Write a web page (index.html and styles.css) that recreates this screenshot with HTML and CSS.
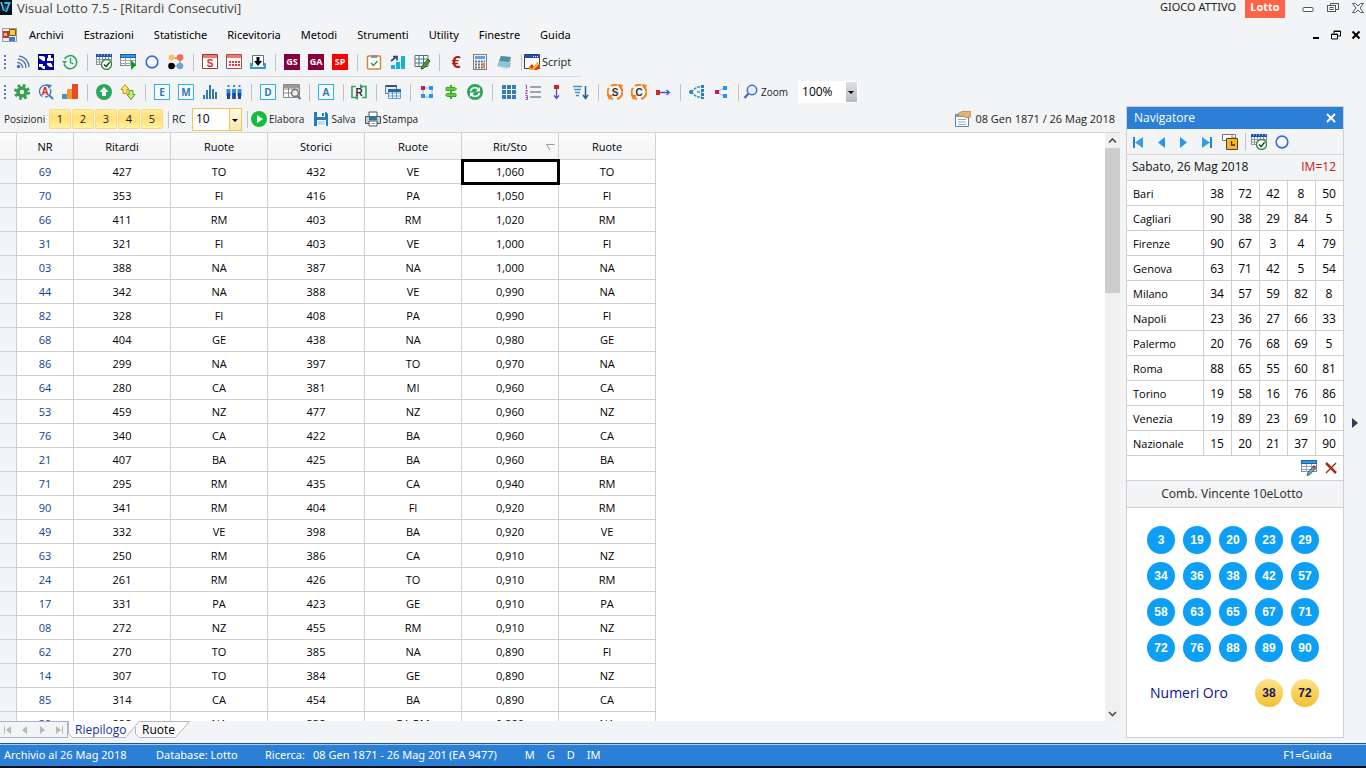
FILE: index.html
```
<!DOCTYPE html>
<html lang="it">
<head>
<meta charset="utf-8">
<title>Visual Lotto 7.5 - [Ritardi Consecutivi]</title>
<link rel="stylesheet" href="styles.css">
</head>
<body>
<svg class="defs" aria-hidden="true">
  <symbol id="calcheck" viewBox="0 0 16 16"><rect x=".5" y=".5" width="15" height="10" fill="#fff" stroke="#8896a5"/><path d="M0 0h16v3H0z" fill="#1e50b4"/><path d="M2 1h1M5 1h1M8 1h1M11 1h1M14 1h1" stroke="#cfe0ff"/><path d="M0 5.500h15M0 8h15M3.500 3v8M6.500 3v8M9.500 3v8M12.500 3v8" stroke="#8896a5"/><circle cx="10.500" cy="10.500" r="5" fill="#fff" stroke="#2f8a3a" stroke-width="1.300"/><path d="M8 10.500l2 2 3.500-4" fill="none" stroke="#333" stroke-width="1.500"/></symbol>
  <symbol id="ring" viewBox="0 0 16 16"><circle cx="8" cy="8" r="5.800" fill="#fff" fill-opacity=".5" stroke="#4169e1" stroke-width="1.700"/></symbol>
  <symbol id="tablegrid" viewBox="0 0 16 16"><rect x=".5" y=".5" width="15" height="11" fill="#fff" stroke="#7c8894"/><path d="M0 0h16v4H0z" fill="#1565b8"/><path d="M1 2h14" stroke="#6cc4ff"/><path d="M0 6.500h15M0 9.500h15M5.500 4v8M10.500 4v8" stroke="#9aa6b0"/></symbol>
  <symbol id="cycle" viewBox="0 0 16 16"><path d="M6 15A7 7 0 0 1 2 4M4 2a7 7 0 0 1 6-1M14 4a7 7 0 0 1-4 11" fill="none" stroke="#f5801c" stroke-width="2"/><path d="M10 0l6 1-2 5zM0 11h6l-4 5z" fill="#f5801c"/></symbol>
</svg>

<header class="titlebar">
  <svg class="logo" viewBox="0 0 12 15"><path d="M0 0h12v15H0z" fill="#061018"/><path d="M0 2l3 9h2L2 2zM4 2h7L7 12H5l3-8H5z" fill="#35b8e8"/><path d="M5 5l1 6" stroke="#1b6a96"/></svg>
  <h1>Visual Lotto 7.5 - [Ritardi Consecutivi]</h1>
  <span class="game">GIOCO ATTIVO</span><strong class="badge">Lotto</strong>
  <div class="winbtns">
    <button aria-label="Riduci"><svg viewBox="0 0 12 12"><rect x="1" y="5.500" width="10" height="4" rx="1" fill="#fff" stroke="#4a5560"/></svg></button>
    <button aria-label="Ripristina"><svg viewBox="0 0 12 12"><path d="M3.500 3V1.500h8v6H9" fill="none" stroke="#4a5560"/><rect x=".5" y="3.500" width="8" height="6" fill="#fff" stroke="#4a5560"/><rect x="3" y="5.500" width="3" height="2" fill="none" stroke="#4a5560"/></svg></button>
    <button aria-label="Chiudi"><svg viewBox="0 0 12 12"><path d="M.5 1.500h3L6 4l2.500-2.500h3L8 6l3.500 4.500h-3L6 8l-2.500 2.500h-3L4 6z" fill="#fff" stroke="#4a5560"/></svg></button>
  </div>
</header>

<nav class="menubar">
  <svg class="i16" viewBox="0 0 16 16"><path d="M.5 1.500h14v13H.5z" fill="#eee" stroke="#999"/><path d="M1 4h6v7H1z" fill="#c03a2b"/><path d="M2 6h3v3H2z" fill="#f7b0a0"/><path d="M7.500 2.500h6v6h-6z" fill="#f9c93c" stroke="#7a5a10"/><path d="M7 10h6v4H7z" fill="#3f77d4"/></svg>
  <a href="#">Archivi</a><a href="#">Estrazioni</a><a href="#">Statistiche</a><a href="#">Ricevitoria</a><a href="#">Metodi</a><a href="#">Strumenti</a><a href="#">Utility</a><a href="#">Finestre</a><a href="#">Guida</a>
  <div class="docbtns">
    <button aria-label="Riduci documento"><svg viewBox="0 0 10 10"><path d="M2 8h6" stroke="#000" stroke-width="2"/></svg></button>
    <button aria-label="Ripristina documento"><svg viewBox="0 0 10 10"><path d="M3 3V1h6.500v5H7M3 1.500h6M.5 4h6v5h-6zM.5 4.500h6" fill="none" stroke="#000"/></svg></button>
    <button aria-label="Chiudi documento"><svg viewBox="0 0 10 10"><path d="M1.500 1.500l7 7m0-7l-7 7" stroke="#000" stroke-width="2"/></svg></button>
  </div>
</nav>

<div class="toolbar first" role="toolbar" aria-label="Standard">
  <i class="grip"></i>
  <button aria-label="Feed"><svg viewBox="0 0 16 16"><circle cx="4.500" cy="12.500" r="1.700" fill="#4a6ca8"/><path d="M3 8.500a5 5 0 0 1 5.500 5.500M4 5a8.500 8.500 0 0 1 8 9M5 2a11 11 0 0 1 10 11" fill="none" stroke="#5b7bb2" stroke-width="1.500"/></svg></button>
  <button aria-label="Quadri"><svg viewBox="0 0 16 16"><path d="M0 0h16v16H0z" fill="#00008f"/><path d="M1 2h4l2 1v4H5L1 4zM10 1h3v3h2v3H9V4h1zM1 10h4v2h2v3H5l-2-2H1zM9 9h4l2 4h-3l-3-2z" fill="#fff"/><path d="M0 8h16M8 0v16" stroke="#0000c8" stroke-width="2"/></svg></button>
  <button aria-label="Cronologia"><svg viewBox="0 0 16 16"><path d="M2.500 5A6.500 6.500 0 1 1 2 10" fill="none" stroke="#26a65b" stroke-width="1.500"/><path d="M0 7h5L2.500 10z" fill="#26a65b"/><path d="M8.500 4v4.500l3 1.500" fill="none" stroke="#26a65b" stroke-width="1.300"/></svg></button>
  <i class="sep"></i>
  <button aria-label="Verifica calendario"><svg><use href="#calcheck"/></svg></button>
  <button aria-label="Esegui tabella"><svg viewBox="0 0 16 16"><use href="#tablegrid" width="16" height="16"/><path d="M11 6l5 5-5 5z" fill="#0d9a18"/></svg></button>
  <button aria-label="Cerchio"><svg><use href="#ring"/></svg></button>
  <button aria-label="Gruppi"><svg viewBox="0 0 16 16"><path d="M4 4h8M4 12h8M12 4v8" stroke="#777"/><circle cx="3.500" cy="3.500" r="3" fill="#f7c35f"/><circle cx="12" cy="3.500" r="3.300" fill="#f76c4d"/><circle cx="3.500" cy="12" r="3.300" fill="#000"/><circle cx="12" cy="12" r="3.300" fill="#6ea4d8"/></svg></button>
  <i class="sep"></i>
  <button aria-label="Scheda S"><svg viewBox="0 0 16 16"><path d="M.5.500h15v14H.5z" fill="#fff" stroke="#8b4040"/><path d="M1 1h14v3H1z" fill="#f4776e"/><text x="8" y="13" class="ired">S</text></svg></button>
  <button aria-label="Calendario"><svg viewBox="0 0 16 16"><path d="M.5.500h15v14H.5z" fill="#fff" stroke="#a05050"/><path d="M1 1h14v3H1z" fill="#f4776e"/><path d="M3 8h11M3 11h11" stroke="#e33" stroke-width="2" stroke-dasharray="2 1"/></svg></button>
  <button aria-label="Scarica"><svg viewBox="0 0 16 16"><path d="M2.500 12V1.500h11V12" fill="#fff" stroke="#65717d"/><path d="M0 9h2v4h12V9h2v6H0z" fill="#2a9fd6"/><path d="M6.500 3h3v4H12l-4 5-4-5h2.500z" fill="#000"/></svg></button>
  <i class="sep"></i>
  <button class="tag plum">GS</button><button class="tag plum">GA</button><button class="tag red">SP</button>
  <i class="sep"></i>
  <button aria-label="Appunti"><svg viewBox="0 0 16 16"><rect x="1.500" y="2" width="13" height="13" rx="1" fill="#fff" stroke="#c98b3c" stroke-width="1.500"/><path d="M5 1h6v3H5z" fill="#8b95a0"/><path d="M5 9l2.500 2.500L11.500 7" fill="none" stroke="#3c9460" stroke-width="1.500"/></svg></button>
  <button aria-label="Andamento"><svg viewBox="0 0 16 16"><path d="M1 11h4v4H1zM6 8h4v7H6zM11 2h4v13h-4z" fill="#10b4d8"/><path d="M1 7l5-4M3 2.500h4v4" fill="none" stroke="#26459b" stroke-width="1.700"/></svg></button>
  <button aria-label="Modifica griglia"><svg viewBox="0 0 16 16"><path d="M1 1.500h13v11H1zM1 5h13M1 9h13M5 1v12M9.500 1v12" fill="#fff" stroke="#477487"/><path d="M14 5l2 2-6 7-3 1 1-3z" fill="#49a72b" stroke="#22541a"/></svg></button>
  <i class="sep"></i>
  <button class="euro">€</button>
  <button aria-label="Calcolatrice"><svg viewBox="0 0 16 16"><rect x="1.500" y=".5" width="13" height="15" fill="#eef" stroke="#887e78"/><path d="M3 2h10v3H3z" fill="#5aa8e8"/><path d="M3 7.500h10M3 10.500h10M3 13.500h10" stroke="#777" stroke-width="2" stroke-dasharray="2 1"/><path d="M11 9h2v5h-2z" fill="#e48a40"/></svg></button>
  <button aria-label="Taccuino"><svg viewBox="0 0 16 16"><path d="M5 2l10 1-3 11-11-2z" fill="#8cc6d6"/><path d="M5 2l10 1-2 5-10-1z" fill="#4f8fa6"/><path d="M15 3l-1 10-2 1z" fill="#91a5ad"/><path d="M1 12l11 2-1 1-9-2z" fill="#c6d8df"/></svg></button>
  <i class="sep narrow"></i>
  <button class="labeled"><svg viewBox="0 0 16 16"><path d="M.5.500h15v14H.5z" fill="#fff" stroke="#345"/><path d="M1 1h14v3H1z" fill="#2748b8"/><path d="M9 2.500h5" stroke="#fff" stroke-dasharray="1"/><path d="M5 13l3-3 3 4 5-5v4l-3 3H6z" fill="#e23b1d"/><path d="M5 12l3 3 5-7 2 1-5 7H6z" fill="#f5b91d"/></svg>Script</button>
</div>

<div class="toolbar second" role="toolbar" aria-label="Analisi">
  <i class="grip"></i>
  <button aria-label="Impostazioni"><svg viewBox="0 0 16 16"><circle cx="8" cy="8" r="6.500" fill="none" stroke="#35a052" stroke-width="3" stroke-dasharray="2.600 2.500"/><circle cx="8" cy="8" r="4" fill="none" stroke="#35a052" stroke-width="3.500"/></svg></button>
  <button aria-label="Analizza"><svg viewBox="0 0 16 16"><path d="M4.500 12.500A6 6 0 0 1 9 1.500M12.500 5A6 6 0 0 1 7 13" fill="none" stroke="#3a82c4" stroke-width="1.400"/><path d="M11 11l4 4" stroke="#3a82c4" stroke-width="2"/><path d="M8 0l6 1-3 4z" fill="#3a82c4"/><text x="7" y="10.500" class="ired">A</text></svg></button>
  <button aria-label="Grafico"><svg viewBox="0 0 16 16"><path d="M0 10h5v5H0z" fill="#4990cc"/><path d="M5 5h5v10H5z" fill="#f99521"/><path d="M10 0h6v15h-6z" fill="#e54b24"/></svg></button>
  <i class="sep"></i>
  <button aria-label="Su"><svg viewBox="0 0 16 16"><circle cx="8" cy="8" r="8" fill="#2aa75a"/><path d="M8 3l4.500 5H10v4H6V8H3.500z" fill="#fff"/></svg></button>
  <button aria-label="Scambia"><svg viewBox="0 0 16 16"><path d="M5 .5l4 5H7v4H3v-4H1z" fill="#ffe56a" stroke="#b89618"/><path d="M9 6.500h4v4h2l-4 5-4-5h2z" fill="#c9ed75" stroke="#5a9d20"/></svg></button>
  <i class="sep"></i>
  <button class="letter">E</button><button class="letter">M</button>
  <button aria-label="Istogramma"><svg viewBox="0 0 16 16"><path d="M2 15v-4M5 15V6M8 15V1M11 15V5M14 15V8" stroke="#3478b0" stroke-width="2"/></svg></button>
  <button aria-label="Persone"><svg viewBox="0 0 16 16"><path d="M2.500 5v7M8 5v10M13.500 5v7" stroke="#2a92d0" stroke-width="4"/><path d="M2.500 9v6M8 9v6M13.500 9v6" stroke="#273f98" stroke-width="3"/><path d="M2.500 1v2M8 1v2M13.500 1v2" stroke="#5578b8" stroke-width="2"/></svg></button>
  <i class="sep"></i>
  <button class="letter">D</button>
  <button aria-label="Cerca nella tabella"><svg class="wide" viewBox="0 0 18 16"><path d="M.5.500h16v13H.5zM0 5h16M0 9h16M5.500 1v12M11 1v12" fill="#fff" stroke="#888"/><path d="M1 1h15v3H1z" fill="#999"/><circle cx="12" cy="9" r="3.500" fill="#e9edf0" stroke="#777" stroke-width="1.500"/><path d="M14.500 12l3 3" stroke="#777" stroke-width="2"/></svg></button>
  <i class="sep"></i>
  <button class="letter">A</button>
  <i class="sep tight"></i>
  <button aria-label="Ricalcola"><svg viewBox="0 0 16 16"><path d="M5 2.500H1v11h4M11 13.500h4v-11h-4" fill="none" stroke="#39a36c" stroke-width="1.700"/><path d="M9 0l4 2.500-4 2.500zM7 11l-4 2.500L7 16z" fill="#39a36c"/><text x="8" y="11.500" class="idark">R</text></svg></button>
  <i class="sep"></i>
  <button aria-label="Tabelle"><svg viewBox="0 0 16 16"><path d="M.5 1.500h11v8H.5z" fill="#e6edf4" stroke="#678"/><path d="M1 1h11v2H1z" fill="#456"/><path d="M3.500 5.500h12v9h-12zM4 9h12M4 12h12M7.500 6v9M11.500 6v9" fill="#fff" stroke="#5c9fd0"/><path d="M3 5h13v3H3z" fill="#28689e"/></svg></button>
  <i class="sep"></i>
  <button aria-label="Nodi"><svg viewBox="0 0 16 16"><path d="M4 4h9v9H4z" fill="none" stroke="#8ab9df"/><path d="M2 2h4v4H2z" fill="#d31652"/><path d="M10 2h4v4h-4zM2 10h4v4H2zM10 10h4v4h-4z" fill="#2994ee"/></svg></button>
  <button aria-label="Direzioni"><svg viewBox="0 0 16 16"><path d="M8 1v14" stroke="#38a832" stroke-width="2"/><path d="M3 3.500h9l1.500 1.500L12 6.500H3zM13 9.500H4L2.500 11 4 12.500h9z" fill="#62cc36" stroke="#38a832"/></svg></button>
  <button aria-label="Aggiorna"><svg viewBox="0 0 16 16"><circle cx="8" cy="8" r="8" fill="#2aa75a"/><path d="M3.500 7a4.500 4.500 0 0 1 8-1.500M12.500 9a4.500 4.500 0 0 1-8 1.500" fill="none" stroke="#fff" stroke-width="1.700"/><path d="M13 3v4.500H8.500zM3 13V8.500h4.500z" fill="#fff"/></svg></button>
  <i class="sep"></i>
  <button aria-label="Riquadri"><svg viewBox="0 0 16 16"><path d="M3 1v14M8 1v14M13 1v14" stroke="#367db8" stroke-width="4" stroke-dasharray="4 1"/></svg></button>
  <button aria-label="Elenco"><svg viewBox="0 0 16 16"><path d="M5 3h11M5 8h11M5 13h11" stroke="#78909c" stroke-width="1.500"/><path d="M.5 1h1v4M.5 6.500h2L.5 9.500h2M.5 11.500h2v4h-2M.5 13.500h2" fill="none" stroke="#a14ab5"/></svg></button>
  <button aria-label="Verso il basso"><svg viewBox="0 0 16 16"><path d="M5 1h5v4H5z" fill="#d52222"/><path d="M7.500 5v9M5 11.500l2.500 3 2.500-3" fill="none" stroke="#4650e8" stroke-width="1.300"/></svg></button>
  <button aria-label="Ordina"><svg viewBox="0 0 16 16"><path d="M0 2.500h9M1 5.500h7M2 8.500h5M3 11.500h3" stroke="#4c90bd" stroke-width="1.500"/><path d="M12.500 2v12M10 11l2.500 3.500L15 11" fill="none" stroke="#1f6298" stroke-width="1.500"/></svg></button>
  <i class="sep"></i>
  <button aria-label="Ciclo S"><svg viewBox="0 0 16 16"><use href="#cycle" width="16" height="16"/><text x="8" y="11.500" class="idark">S</text></svg></button>
  <button aria-label="Ciclo C"><svg viewBox="0 0 16 16"><use href="#cycle" width="16" height="16"/><text x="8" y="11.500" class="idark">C</text></svg></button>
  <button aria-label="Verso destra"><svg viewBox="0 0 16 16"><path d="M1 6h4v5H1z" fill="#d52222"/><path d="M5 8.500h9M11.500 6l3 2.500-3 2.500" fill="none" stroke="#4650e8" stroke-width="1.300"/></svg></button>
  <i class="sep"></i>
  <button aria-label="Rami"><svg viewBox="0 0 16 16"><path d="M2 8l6-5h5M8 8h5M2 8l6 5h5" fill="none" stroke="#3f8dc0" stroke-width="1.500" stroke-dasharray="3 1"/><circle cx="2" cy="8" r="2" fill="#2c80b9"/><path d="M13.500 1v14" stroke="#2c80b9" stroke-width="3" stroke-dasharray="3 1"/></svg></button>
  <button aria-label="Condividi"><svg viewBox="0 0 16 16"><path d="M12 3.500L4 8l8 5" fill="none" stroke="#7fbbe4"/><path d="M2 6h4v4H2z" fill="#d31652"/><path d="M10 2h4v4h-4zM10 10h4v4h-4z" fill="#2994ee"/></svg></button>
  <i class="sep"></i>
  <label class="labeled" for="zoom"><svg viewBox="0 0 16 16"><circle cx="9" cy="6" r="4.700" fill="#e6f0ff" stroke="#4567cf" stroke-width="1.500"/><path d="M5.500 9.500L1.500 14" stroke="#4567cf" stroke-width="2.300"/></svg>Zoom</label>
  <span class="combo gray"><select id="zoom"><option>100%</option></select></span>
</div>

<div class="workspace">
  <main class="document">
    <div class="filter">
      <span class="poslabel">Posizioni</span>
      <div class="positions"><button>1</button><button>2</button><button>3</button><button>4</button><button>5</button></div>
      <i class="sep narrow"></i>
      <label class="rc" for="rc">RC</label>
      <span class="combo gold"><select id="rc"><option>10</option></select></span>
      <i class="sep tight"></i>
      <button class="labeled"><svg viewBox="0 0 16 16"><circle cx="8" cy="8" r="8" fill="#0fbe3c"/><path d="M6 4l6 4-6 4z" fill="#fff"/></svg>Elabora</button>
      <button class="labeled"><svg viewBox="0 0 16 16"><path d="M1 1h12l2 2v12H1z" fill="#277db9"/><path d="M4 1h8v5H4zM4 9h9v6H4z" fill="#fff"/><path d="M9 2h2v3H9z" fill="#277db9"/><path d="M5 11h7M5 13h7" stroke="#8bbbd8"/></svg>Salva</button>
      <button class="labeled"><svg viewBox="0 0 16 16"><path d="M1 5.500h14.500v7H.5v-7z" fill="#c8cdd1" stroke="#4e555b"/><path d="M4 1h8v5H4z" fill="#fff" stroke="#4e555b"/><path d="M4 5h8v4H4z" fill="#28779b"/><path d="M4 10h8v5H4z" fill="#fff" stroke="#4e555b"/><path d="M6 12.500h4" stroke="#999"/></svg>Stampa</button>
      <span class="range"><svg class="i16" viewBox="0 0 16 16"><path d="M.5 3.500h13v12H.5z" fill="#fff" stroke="#5685ac"/><path d="M1 4h12v2H1z" fill="#6fa8d5"/><path d="M3 8.500h8M3 11h8M3 13.500h8" stroke="#9aabb9"/><path d="M3 2.500L7 .5h9v5l-4 1.500-4-2-4 1z" fill="#e3b27c" stroke="#a97845" stroke-width=".7"/></svg>08 Gen 1871 / 26 Mag 2018</span>
    </div>
    <div class="gridarea">
      <div class="gridclip">
      <table class="grid">
        <colgroup><col class="cmark"><col class="cnr"><col class="cval"><col class="cval"><col class="cval"><col class="cval"><col class="cval"><col class="cval"></colgroup>
        <thead><tr><th></th><th>NR</th><th>Ritardi</th><th>Ruote</th><th>Storici</th><th>Ruote</th><th class="sorted">Rit/Sto<svg viewBox="0 0 9 7"><path d="M8.500.500H.5L4 6" fill="none" stroke="#999"/></svg></th><th>Ruote</th></tr></thead>
        <tbody>
        <tr><td></td><td>69</td><td>427</td><td>TO</td><td>432</td><td>VE</td><td class="current">1,060</td><td>TO</td></tr>
        <tr><td></td><td>70</td><td>353</td><td>FI</td><td>416</td><td>PA</td><td>1,050</td><td>FI</td></tr>
        <tr><td></td><td>66</td><td>411</td><td>RM</td><td>403</td><td>RM</td><td>1,020</td><td>RM</td></tr>
        <tr><td></td><td>31</td><td>321</td><td>FI</td><td>403</td><td>VE</td><td>1,000</td><td>FI</td></tr>
        <tr><td></td><td>03</td><td>388</td><td>NA</td><td>387</td><td>NA</td><td>1,000</td><td>NA</td></tr>
        <tr><td></td><td>44</td><td>342</td><td>NA</td><td>388</td><td>VE</td><td>0,990</td><td>NA</td></tr>
        <tr><td></td><td>82</td><td>328</td><td>FI</td><td>408</td><td>PA</td><td>0,990</td><td>FI</td></tr>
        <tr><td></td><td>68</td><td>404</td><td>GE</td><td>438</td><td>NA</td><td>0,980</td><td>GE</td></tr>
        <tr><td></td><td>86</td><td>299</td><td>NA</td><td>397</td><td>TO</td><td>0,970</td><td>NA</td></tr>
        <tr><td></td><td>64</td><td>280</td><td>CA</td><td>381</td><td>MI</td><td>0,960</td><td>CA</td></tr>
        <tr><td></td><td>53</td><td>459</td><td>NZ</td><td>477</td><td>NZ</td><td>0,960</td><td>NZ</td></tr>
        <tr><td></td><td>76</td><td>340</td><td>CA</td><td>422</td><td>BA</td><td>0,960</td><td>CA</td></tr>
        <tr><td></td><td>21</td><td>407</td><td>BA</td><td>425</td><td>BA</td><td>0,960</td><td>BA</td></tr>
        <tr><td></td><td>71</td><td>295</td><td>RM</td><td>435</td><td>CA</td><td>0,940</td><td>RM</td></tr>
        <tr><td></td><td>90</td><td>341</td><td>RM</td><td>404</td><td>FI</td><td>0,920</td><td>RM</td></tr>
        <tr><td></td><td>49</td><td>332</td><td>VE</td><td>398</td><td>BA</td><td>0,920</td><td>VE</td></tr>
        <tr><td></td><td>63</td><td>250</td><td>RM</td><td>386</td><td>CA</td><td>0,910</td><td>NZ</td></tr>
        <tr><td></td><td>24</td><td>261</td><td>RM</td><td>426</td><td>TO</td><td>0,910</td><td>RM</td></tr>
        <tr><td></td><td>17</td><td>331</td><td>PA</td><td>423</td><td>GE</td><td>0,910</td><td>PA</td></tr>
        <tr><td></td><td>08</td><td>272</td><td>NZ</td><td>455</td><td>RM</td><td>0,910</td><td>NZ</td></tr>
        <tr><td></td><td>62</td><td>270</td><td>TO</td><td>385</td><td>NA</td><td>0,890</td><td>FI</td></tr>
        <tr><td></td><td>14</td><td>307</td><td>TO</td><td>384</td><td>GE</td><td>0,890</td><td>NZ</td></tr>
        <tr><td></td><td>85</td><td>314</td><td>CA</td><td>454</td><td>BA</td><td>0,890</td><td>CA</td></tr>
        <tr><td></td><td>39</td><td>298</td><td>NA</td><td>338</td><td>PA RM</td><td>0,880</td><td>NA</td></tr>
        </tbody>
      </table>
      </div>
      <div class="scroll">
        <button aria-label="Scorri su"><svg viewBox="0 0 15 15"><path d="M4 9.500L7.500 6 11 9.500" fill="none" stroke="#505050" stroke-width="1.700"/></svg></button>
        <div class="track"><div class="thumb"></div></div>
        <button aria-label="Scorri giù"><svg viewBox="0 0 15 15"><path d="M4 6l3.500 3.500L11 6" fill="none" stroke="#505050" stroke-width="1.700"/></svg></button>
      </div>
    </div>
    <div class="sheets">
      <div class="sheetnav">
        <button aria-label="Primo foglio"><svg viewBox="0 0 10 10"><path d="M1.500 1v8" stroke="#b5b8bc"/><path d="M8 1v8L3 5z" fill="#b5b8bc"/></svg></button>
        <button aria-label="Foglio precedente"><svg viewBox="0 0 10 10"><path d="M7 1v8L2 5z" fill="#b5b8bc"/></svg></button>
        <button aria-label="Foglio successivo"><svg viewBox="0 0 10 10"><path d="M3 1v8l5-4z" fill="#b5b8bc"/></svg></button>
        <button aria-label="Ultimo foglio"><svg viewBox="0 0 10 10"><path d="M8.500 1v8" stroke="#b5b8bc"/><path d="M2 1v8l5-4z" fill="#b5b8bc"/></svg></button>
      </div>
      <button class="sheet on"><svg viewBox="0 0 72 17" preserveAspectRatio="none"><path d="M.5 0v12l4 4.500h53L71.500 0" fill="#fff" stroke="#b4b6ba"/></svg><span>Riepilogo</span></button>
      <button class="sheet"><svg viewBox="0 0 56 17" preserveAspectRatio="none"><path d="M.5 6v7l4 3.500h36L54.500.500H5" fill="#fbfbfb" stroke="#b4b6ba"/></svg><span>Ruote</span></button>
    </div>
  </main>

  <aside class="navigator">
    <div class="navtitle"><h2>Navigatore</h2><button aria-label="Chiudi navigatore"><svg viewBox="0 0 12 12"><path d="M2 2l8 8m0-8l-8 8" stroke="#fff" stroke-width="2"/></svg></button></div>
    <div class="navtools">
      <button aria-label="Prima estrazione"><svg viewBox="0 0 16 16"><path d="M4 3v11" stroke="#2386cc" stroke-width="2"/><path d="M13 3v11L5 8.500z" fill="#3a9de0"/></svg></button>
      <button aria-label="Precedente"><svg viewBox="0 0 16 16"><path d="M12 3v11L5 8.500z" fill="#2196f3"/></svg></button>
      <button aria-label="Successiva"><svg viewBox="0 0 16 16"><path d="M4 3v11l7-5.500z" fill="#2196f3"/></svg></button>
      <button aria-label="Ultima estrazione"><svg viewBox="0 0 16 16"><path d="M12 3v11" stroke="#2386cc" stroke-width="2"/><path d="M3 3v11l8-5.500z" fill="#3a9de0"/></svg></button>
      <button aria-label="Orario"><svg viewBox="0 0 16 16"><path d="M.5.500h13v6H.5z" fill="#fff" stroke="#777"/><path d="M10 1v3h3" fill="none" stroke="#777"/><path d="M4.500 4.500h11v11h-11z" fill="#f9b52b" stroke="#5d4414"/><path d="M9.500 7v4h3.500" fill="none" stroke="#402c05" stroke-width="1.300"/></svg></button>
      <i class="sep narrow"></i>
      <button aria-label="Verifica calendario"><svg><use href="#calcheck"/></svg></button>
      <button aria-label="Cerchio"><svg><use href="#ring"/></svg></button>
    </div>
    <div class="navdate"><span>Sabato, 26 Mag 2018</span><span class="im">IM=12</span></div>
    <table class="wheels">
      <tr><th scope="row">Bari</th><td>38</td><td>72</td><td>42</td><td>8</td><td>50</td></tr>
      <tr><th scope="row">Cagliari</th><td>90</td><td>38</td><td>29</td><td>84</td><td>5</td></tr>
      <tr><th scope="row">Firenze</th><td>90</td><td>67</td><td>3</td><td>4</td><td>79</td></tr>
      <tr><th scope="row">Genova</th><td>63</td><td>71</td><td>42</td><td>5</td><td>54</td></tr>
      <tr><th scope="row">Milano</th><td>34</td><td>57</td><td>59</td><td>82</td><td>8</td></tr>
      <tr><th scope="row">Napoli</th><td>23</td><td>36</td><td>27</td><td>66</td><td>33</td></tr>
      <tr><th scope="row">Palermo</th><td>20</td><td>76</td><td>68</td><td>69</td><td>5</td></tr>
      <tr><th scope="row">Roma</th><td>88</td><td>65</td><td>55</td><td>60</td><td>81</td></tr>
      <tr><th scope="row">Torino</th><td>19</td><td>58</td><td>16</td><td>76</td><td>86</td></tr>
      <tr><th scope="row">Venezia</th><td>19</td><td>89</td><td>23</td><td>69</td><td>10</td></tr>
      <tr><th scope="row">Nazionale</th><td>15</td><td>20</td><td>21</td><td>37</td><td>90</td></tr>
    </table>
    <div class="navactions">
      <button aria-label="Modifica"><svg viewBox="0 0 16 16"><use href="#tablegrid" width="16" height="16"/><path d="M13 5.500l2 2-6 7-3 1 1-3z" fill="#58a9e0" stroke="#564028" stroke-width=".8"/><path d="M13 5.500l2 2-1.500 1.500-2-2z" fill="#d33"/></svg></button>
      <button aria-label="Elimina"><svg viewBox="0 0 16 16"><path d="M3 3l10 10" stroke="#a83018" stroke-width="2.500"/><path d="M13 3L3 13" stroke="#a83018" stroke-width="1.500"/></svg></button>
    </div>
    <h3>Comb. Vincente 10eLotto</h3>
    <div class="winning">
      <div class="balls"><b>3</b><b>19</b><b>20</b><b>23</b><b>29</b><b>34</b><b>36</b><b>38</b><b>42</b><b>57</b><b>58</b><b>63</b><b>65</b><b>67</b><b>71</b><b>72</b><b>76</b><b>88</b><b>89</b><b>90</b></div>
      <div class="balls oro"><span>Numeri Oro</span><b>38</b><b>72</b></div>
    </div>
  </aside>
  <div class="dock"><button aria-label="Espandi"><svg viewBox="0 0 6 10"><path d="M0 0v10l6-5z" fill="#2e3f57"/></svg></button></div>
</div>

<footer class="status">
  <span class="s1">Archivio al 26 Mag 2018</span><span class="s2">Database: Lotto</span><span class="s3">Ricerca:</span><span class="s4">08 Gen 1871 - 26 Mag 201</span><span>(EA 9477)</span>
  <span class="flags"><span>M</span><span>G</span><span>D</span><span>IM</span></span>
  <span class="help">F1=Guida</span>
</footer>
</body>
</html>
```
FILE: styles.css
```
* { box-sizing: border-box; }
body { margin: 0; height: 100vh; display: flex; flex-direction: column; overflow: hidden; background: #f3f4f6; color: #222; font: 11px/16px "Open Sans", "Noto Sans", sans-serif; }
button { border: 0; padding: 0; margin: 0; background: none; color: inherit; font: inherit; }
h1, h2, h3 { margin: 0; font-weight: 400; }
svg { display: block; flex: none; }
a { color: inherit; text-decoration: none; }
.defs { position: absolute; width: 0; height: 0; }
.i16 { width: 16px; height: 16px; }

.titlebar { display: flex; align-items: flex-start; height: 21px; }
.logo { width: 12px; height: 15px; margin-right: 5px; }
.titlebar h1 { flex: 1; font-size: 13px; line-height: 16px; color: #444; }
.game { font-family: "Noto Sans", sans-serif; line-height: 14px; margin-right: 9px; }
.badge { background: #ff6347; color: #fff; width: 40px; height: 18px; text-align: center; font-size: 11px; line-height: 14px; }
.winbtns { display: flex; gap: 13px; margin: 2px 2px 0 17px; }
.winbtns svg { width: 12px; height: 12px; }

.menubar { display: flex; align-items: center; gap: 20px; height: 28px; padding-left: 2px; color: #000; font-family: "Noto Sans", sans-serif; }
.menubar .i16 { margin-right: -9px; }
.docbtns { display: flex; gap: 10px; margin: 0 5px 0 auto; }
.docbtns svg { width: 10px; height: 10px; }

.toolbar { display: flex; align-items: center; }
.first { width: 581px; height: 28px; padding-bottom: 1px; border-bottom: 1px solid #d9dadc; }
.second { height: 30px; }
.toolbar > button { width: 24px; height: 24px; display: flex; align-items: center; justify-content: center; }
.toolbar svg, .navtools svg, .navactions svg, .filter svg { width: 16px; height: 16px; }
.toolbar svg.wide { width: 18px; }
.grip { width: 10px; height: 16px; background: radial-gradient(circle, #4f7fd0 0 1px, transparent 1px) 3px 0 / 4px 4px repeat-y; }
.sep { width: 10px; height: 17px; flex: none; background: linear-gradient(#bfc2c6, #bfc2c6) 5px 0 / 1px 100% no-repeat; }
.sep.tight { width: 9px; }
.sep.narrow { width: 8px; }
.labeled, .toolbar > button.labeled { display: flex; width: auto; align-items: center; gap: 2px; font-size: 10px; }
.toolbar > button.labeled { font-size: 11px; }
.toolbar > .tag { width: 16px; height: 16px; margin: 0 4px; color: #fff; font-size: 9px; font-weight: 700; }
.plum { background: #85003f; }
.red { background: #fb0000; }
.toolbar > .letter { width: 16px; height: 16px; margin: 0 4px; border: 1px solid #2bb0ee; background: #fafdff; color: #3278b4; font-size: 10px; font-weight: 700; }
.toolbar > .euro { color: #a51c1c; font-size: 16px; font-weight: 700; }
.ired, .idark { font: 700 10px "Liberation Sans", sans-serif; text-anchor: middle; fill: #e02020; }
.idark { fill: #333; }

.combo { position: relative; display: flex; background: #fff; }
.combo select { appearance: none; border: 0; margin: 0; background: transparent; font: inherit; font-size: 12px; color: #000; }
.combo::before, .combo::after { content: ""; position: absolute; pointer-events: none; }
.combo::before { top: 1px; bottom: 1px; right: 1px; width: 11px; background: linear-gradient(#dcdee0, #b8bbbe); }
.combo::after { right: 4px; top: 10px; border: 3px solid transparent; border-top-color: #000; border-bottom: 0; }
.combo.gray { width: 60px; height: 22px; margin-left: 10px; }
.combo.gray select { width: 60px; padding: 0 4px; }
.combo.gold { width: 50px; height: 23px; border: 1px solid #efc55e; }
.combo.gold select { width: 48px; padding: 0 3px; }
.combo.gold::before { top: 0; bottom: 0; right: 0; background: linear-gradient(#fffbe8, #fbe6a8); border-left: 1px solid #efc55e; }
.combo.gold::after { right: 3px; }

.workspace { flex: 1; min-height: 0; display: flex; padding-bottom: 5px; }
.document { flex: 1; min-width: 0; display: flex; flex-direction: column; margin-right: 6px; }
.filter { display: flex; align-items: center; height: 25px; padding: 0 5px 1px 4px; }
.poslabel { width: 45px; font-size: 10px; }
.positions { display: flex; gap: 1px; }
.positions button { width: 22px; height: 20px; border: 1px solid #fad978; border-radius: 2px; background: linear-gradient(#ffec9c, #ffdf77 45%, #fff3a0); }
.rc { width: 21px; padding-left: 1px; }
.filter .labeled { margin-right: 9px; }
.range { display: flex; gap: 4px; align-items: center; margin-left: auto; }

.gridarea { flex: 1; min-height: 0; display: flex; border-top: 1px solid #d3d5d8; background: #fff; }
.gridclip { flex: 1; overflow: hidden; }
.grid { border-collapse: separate; border-spacing: 0; table-layout: fixed; width: 656px; color: #000; text-align: center; }
.cmark { width: 17px; }
.cnr { width: 57px; }
.cval { width: 97px; }
.grid th, .grid td { height: 24px; padding: 0; border: solid #d0d0d0; border-width: 0 1px 1px 0; }
.grid th { height: 27px; padding-top: 1px; font-weight: 400; background: linear-gradient(#fbfbfc, #f3f4f5); }
.grid td:first-child { background: #f3f4f6; }
.grid td:nth-child(2) { color: #0b4394; }
.grid .sorted { position: relative; }
.sorted svg { position: absolute; right: 3px; top: 11px; width: 9px; height: 7px; }
.grid .current { position: relative; outline: 3px solid #000; outline-offset: -2px; }
.scroll { width: 15px; display: flex; flex-direction: column; background: #f0f0f0; }
.scroll svg { width: 15px; height: 15px; }
.track { flex: 1; }
.thumb { height: 26%; background: #cdcdcd; }

.sheets { display: flex; align-items: flex-start; height: 17px; }
.sheetnav { width: 68px; height: 17px; display: flex; align-items: center; justify-content: space-around; border: 1px solid #a9b2d0; border-left: 0; }
.sheetnav svg { width: 10px; height: 10px; }
.sheet { position: relative; width: 56px; height: 17px; margin-left: -5px; text-align: left; color: #000; font-size: 12px; }
.sheet.on { z-index: 1; width: 72px; margin-left: 0; color: #1330a0; }
.sheet svg { position: absolute; inset: 0; width: 100%; height: 100%; }
.sheet span { position: relative; padding-left: 7px; }

.navigator { width: 218px; margin-top: -1px; border: 1px solid #d0d0d0; background: #f3f4f6; display: flex; flex-direction: column; color: #111; }
.navtitle { display: flex; align-items: center; height: 22px; padding: 0 6px 0 7px; background: #2b80d5; color: #fff; }
.navtitle h2 { flex: 1; font-size: 12px; line-height: 16px; }
.navtitle svg { width: 12px; height: 12px; }
.navtools { display: flex; align-items: center; height: 26px; padding-left: 3px; gap: 7px; border-bottom: 1px solid #d4d6d9; }
.navtools .sep { margin: 0 -4px 0 -5px; }
.navdate { display: flex; justify-content: space-between; align-items: center; height: 25px; padding: 0 7px 1px 5px; font-size: 12px; }
.im { color: #c81414; }
.wheels { width: 100%; table-layout: fixed; border-collapse: separate; border-spacing: 0; background: #fff; color: #000; }
.wheels th, .wheels td { height: 25px; padding: 1px 0 0; border-top: 1px solid #d0d0d0; border-left: 1px solid #d0d0d0; font-weight: 400; text-align: center; }
.wheels td { width: 28px; padding-right: 1px; font-size: 12px; }
.wheels th { border-left: 0; padding-left: 6px; text-align: left; }
.navactions { display: flex; align-items: center; justify-content: flex-end; gap: 6px; height: 26px; padding-right: 4px; background: #fff; border: solid #d0d0d0; border-width: 1px 0; }
.navigator h3 { height: 27px; border-bottom: 1px solid #d0d0d0; font-family: "Noto Sans", sans-serif; font-size: 12px; line-height: 25px; text-align: center; padding-right: 6px; color: #333; }
.winning { flex: 1; background: #fff; padding: 18px 0 0 20px; }
.balls { display: grid; grid-template-columns: repeat(5, 28px); gap: 8px; }
.balls b { height: 28px; border-radius: 50%; background: #0c9ff5; color: #fff; font: 700 12px/28px "Liberation Sans", sans-serif; text-align: center; }
.oro { margin-top: 17px; align-items: center; }
.oro span { grid-column: span 3; padding-left: 3px; font-size: 14px; line-height: 20px; color: #10108c; }
.oro b { background: linear-gradient(#fde28c, #f2c130); color: #1c1450; }
.dock { width: 22px; display: flex; align-items: center; justify-content: center; }
.dock svg { width: 6px; height: 10px; }

.status { display: flex; align-items: center; height: 25px; padding: 0 34px 0 4px; background: #2b80d5; color: #fff; border-top: 1px solid #1d5a98; border-bottom: 2px solid #07101c; box-shadow: inset 0 1px #a9c9ea; font-family: "Noto Sans", sans-serif; white-space: nowrap; }
.s1 { width: 152px; }
.s2 { width: 109px; }
.s3 { width: 48px; }
.s4 { width: 136px; }
.flags { display: flex; gap: 12px; margin-left: 28px; }
.help { margin-left: auto; }
```
